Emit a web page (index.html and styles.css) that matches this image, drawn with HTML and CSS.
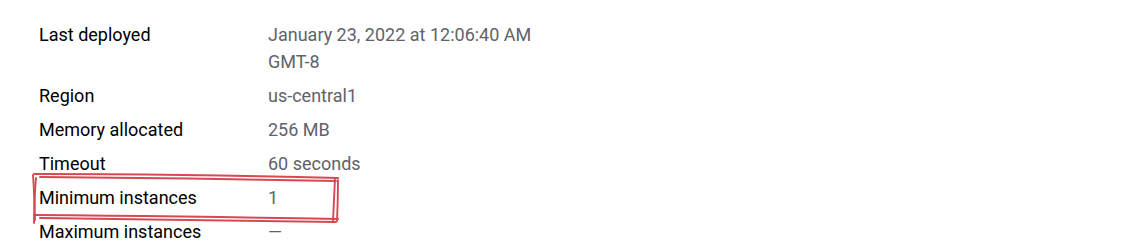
FILE: index.html
```html
<!DOCTYPE html>
<html>
<head>
    <title>Function details</title>
    <meta charset="utf-8">
    <link rel="stylesheet" href="styles.css">
</head>
<body>
    <div class="details">
        <div class="row">
            <div class="label">Last deployed</div>
            <div class="value">January 23, 2022 at 12:06:40 AM GMT-8</div>
        </div>
        <div class="row">
            <div class="label">Region</div>
            <div class="value">us-central1</div>
        </div>
        <div class="row">
            <div class="label">Memory allocated</div>
            <div class="value">256 MB</div>
        </div>
        <div class="row">
            <div class="label">Timeout</div>
            <div class="value">60 seconds</div>
        </div>
        <div class="row marked">
            <div class="label">Minimum instances</div>
            <div class="value">1</div>
            <!-- hand-drawn highlight -->
            <svg class="scribble" width="316" height="58" viewBox="0 0 316 58">
                <path d="M6 4 Q150 4 310 8" />
                <path d="M12 7 Q160 8 308 11" />
                <path d="M5 5 Q7 30 6 53" />
                <path d="M8 8 Q6 30 7 50" />
                <path d="M307 8 Q306 30 305 52" />
                <path d="M310 10 Q310 30 309 51" />
                <path d="M6 45 Q150 46 310 49" />
                <path d="M12 48 Q160 50 308 52" />
            </svg>
        </div>
        <div class="row">
            <div class="label">Maximum instances</div>
            <div class="value">&mdash;</div>
        </div>
    </div>
</body>
</html>
```

FILE: styles.css
```css
body {
    font-family: Roboto, "Liberation Sans", sans-serif;
    margin: 0;
    padding: 17px 0 0 39px;
    background: #fff;
}
.details { width: 540px; }
.row {
    display: flex;
    padding: 3.5px 0;
    font-size: 18px;
    line-height: 27px;
}
.label {
    width: 229px;
    flex: none;
    color: #000;
}
.value {
    width: 290px;
    color: #5f6368;
}
.marked { position: relative; }
.scribble {
    position: absolute;
    left: -11px;
    top: -10px;
    fill: none;
    stroke: #cf2a35;
    stroke-width: 1.9;
    stroke-linecap: round;
    opacity: 0.85;
}
```
